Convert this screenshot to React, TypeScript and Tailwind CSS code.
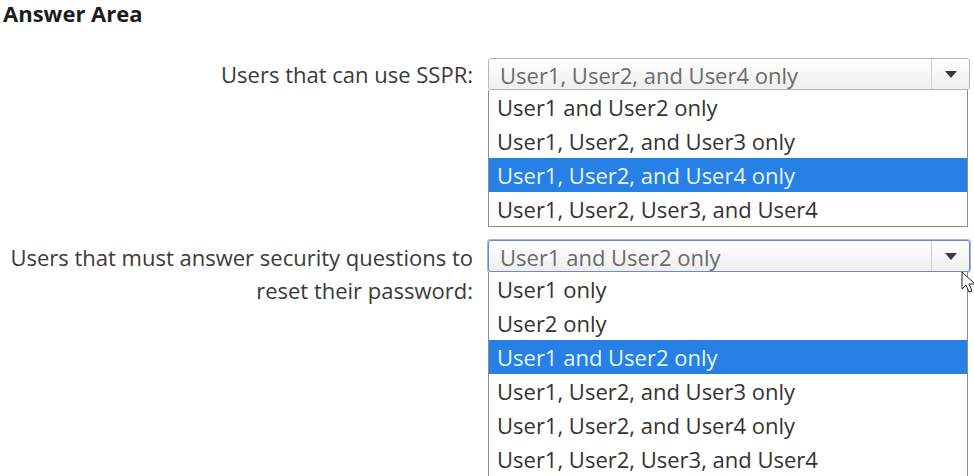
import clsx from 'clsx'

const font = { fontFamily: '"Open Sans", "Noto Sans", "DejaVu Sans", sans-serif' }

type Q = {
  label: string[]
  value: string
  options: string[]
  selected: number
  focused?: boolean
}

const questions: Q[] = [
  {
    label: ['Users that can use SSPR:'],
    value: 'User1, User2, and User4 only',
    options: ['User1 and User2 only', 'User1, User2, and User3 only', 'User1, User2, and User4 only', 'User1, User2, User3, and User4'],
    selected: 2,
  },
  {
    label: ['Users that must answer security questions to', 'reset their password:'],
    value: 'User1 and User2 only',
    options: [
      'User1 only',
      'User2 only',
      'User1 and User2 only',
      'User1, User2, and User3 only',
      'User1, User2, and User4 only',
      'User1, User2, User3, and User4',
    ],
    selected: 2,
    focused: true,
  },
]

function Dropdown({ q }: { q: Q }) {
  return (
    <div className="w-[482px]">
      {/* closed select */}
      <div
        className={clsx(
          'flex h-[32px] rounded-[3px] border bg-gradient-to-b from-white to-[#eeeeee]',
          q.focused ? 'border-[#6d87c9] shadow-[0_0_0_1px_#9fb2e0]' : 'border-[#b5b5b5]'
        )}
      >
        <div className="flex-1 truncate px-[11px] pt-[1px] text-[22px] leading-[30px] text-[#6b6b6b]">{q.value}</div>
        <div className="flex w-[38px] items-center justify-center border-l border-[#d0d0d0]">
          <svg width="14" height="9" viewBox="0 0 14 9">
            <path d="M1 1h12L7 8z" fill="#3a3a3a" />
          </svg>
        </div>
      </div>
      {/* open list */}
      <div className="w-[480px] border border-t-0 border-[#8c8c8c] bg-white">
        {q.options.map((o, i) => (
          <div
            key={o}
            className={clsx(
              'h-[34px] px-[8px] text-[22px] leading-[34px]',
              i === q.selected ? 'bg-[#2680e6] text-[#e8f6ff]' : 'text-[#333333]'
            )}
          >
            {o}
          </div>
        ))}
      </div>
    </div>
  )
}

export default function App() {
  return (
    <div className="relative h-[476px] w-[974px] overflow-hidden bg-white" style={font}>
      <h2 className="pl-[3px] text-[22px] font-bold leading-[26px] text-[#1c1c1c]">Answer Area</h2>

      <div className="mt-[32px] flex flex-col gap-[13px]">
        {questions.map((q, idx) => (
          <div key={idx} className="flex">
            <div
              className={clsx(
                'w-[488px] pr-[15px] text-right text-[22px] leading-[33px] text-[#3a3a3a]',
                idx === 0 ? 'pt-0' : 'pt-[1px]'
              )}
            >
              {q.label.map(l => (
                <div key={l}>{l}</div>
              ))}
            </div>
            <Dropdown q={q} />
          </div>
        ))}
      </div>

      {/* mouse pointer */}
      <svg className="absolute left-[961px] top-[271px]" width="14" height="22" viewBox="0 0 14 22">
        <path d="M1 1v17l4-4 3 7 3-1-3-7h6z" fill="#fff" stroke="#222" strokeWidth="1" />
      </svg>
    </div>
  )
}
